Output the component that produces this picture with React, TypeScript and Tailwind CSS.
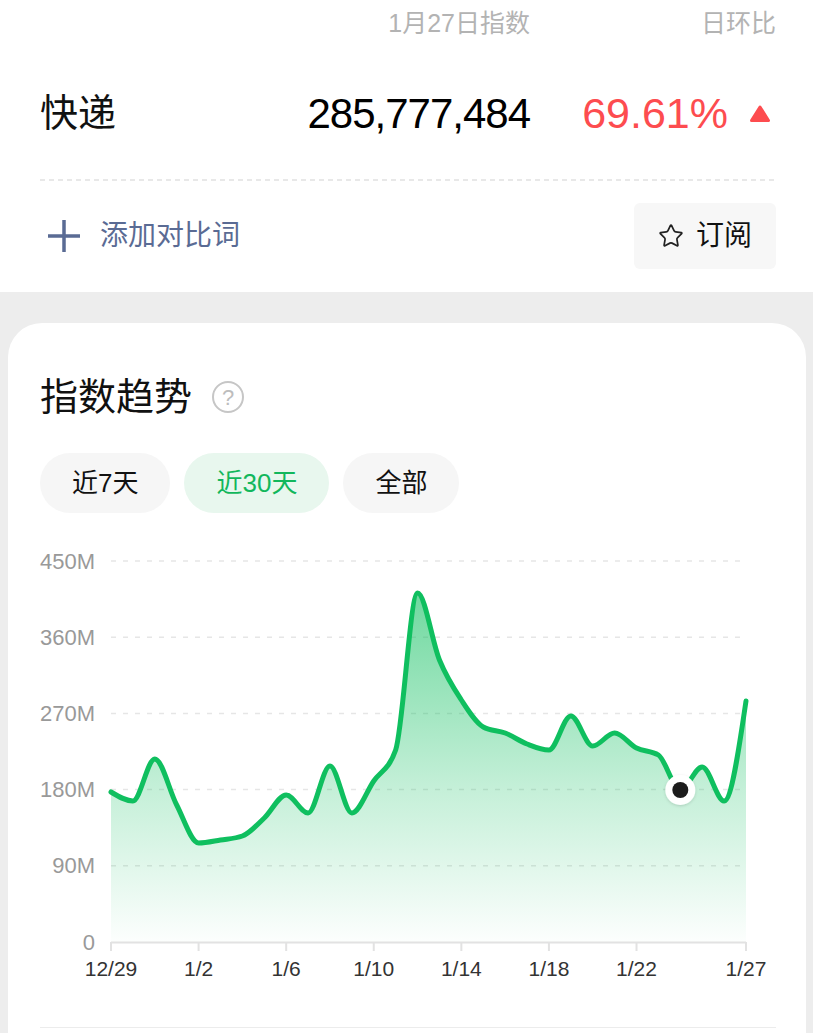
import { Star } from 'lucide-react'

const values = [
  792, 801, 759, 805, 843, 840, 836, 818, 795, 813, 766, 813, 781, 750, 593,
  660, 700, 727, 733, 744, 750, 716, 746, 733, 748, 755, 790, 767, 801, 701,
]

const X0 = 111
const X1 = 746
const Y0 = 942
const STEP = (X1 - X0) / 29

const gridValues = [450, 360, 270, 180, 90]
const xLabels = [
  { i: 0, t: '12/29' },
  { i: 4, t: '1/2' },
  { i: 8, t: '1/6' },
  { i: 12, t: '1/10' },
  { i: 16, t: '1/14' },
  { i: 20, t: '1/18' },
  { i: 24, t: '1/22' },
  { i: 29, t: '1/27' },
]

const valueToY = (v: number) => Y0 - (v / 450) * 381

// monotone cubic through the points, same idea as d3's curveMonotoneX
function buildPath(ys: number[]) {
  const h = STEP
  const n = ys.length
  const s: number[] = []
  for (let i = 0; i < n - 1; i++) s.push((ys[i + 1] - ys[i]) / h)
  const m: number[] = new Array(n).fill(0)
  for (let i = 1; i < n - 1; i++) {
    const a = s[i - 1]
    const b = s[i]
    if (a * b <= 0) {
      m[i] = 0
    } else {
      const p = (a + b) / 2
      m[i] = (Math.sign(a) + Math.sign(b)) * Math.min(Math.abs(a), Math.abs(b), 0.5 * Math.abs(p))
    }
  }
  m[0] = (3 * s[0] - m[1]) / 2
  m[n - 1] = (3 * s[n - 2] - m[n - 2]) / 2

  let d = `M${X0},${ys[0]}`
  for (let i = 0; i < n - 1; i++) {
    const xa = X0 + i * h
    const xb = xa + h
    d += ` C${xa + h / 3},${ys[i] + (m[i] * h) / 3} ${xb - h / 3},${ys[i + 1] - (m[i + 1] * h) / 3} ${xb},${ys[i + 1]}`
  }
  return d
}

function TrendChart() {
  const line = buildPath(values)
  const area = `${line} L${X1},${Y0} L${X0},${Y0} Z`
  const dotX = X0 + 26 * STEP
  const dotY = values[26]

  return (
    <svg width={798} height={470} viewBox="8 530 798 470" className="block">
      <defs>
        <linearGradient id="areaFill" x1="0" y1="0" x2="0" y2="1">
          <stop offset="0%" stopColor="#0fbf5f" stopOpacity={0.6} />
          <stop offset="55%" stopColor="#0fbf5f" stopOpacity={0.25} />
          <stop offset="100%" stopColor="#0fbf5f" stopOpacity={0.01} />
        </linearGradient>
        <filter id="dotShadow" x="-50%" y="-50%" width="200%" height="200%">
          <feDropShadow dx="0" dy="1" stdDeviation="1.5" floodColor="#000" floodOpacity="0.15" />
        </filter>
      </defs>

      {gridValues.map((v) => (
        <g key={v}>
          <line
            x1={X0}
            x2={740}
            y1={valueToY(v)}
            y2={valueToY(v)}
            stroke="#e6e6e6"
            strokeWidth={1.5}
            strokeDasharray="5 7"
          />
          <text x={95} y={valueToY(v)} textAnchor="end" dominantBaseline="central" fontSize={22} fill="#999">
            {v}M
          </text>
        </g>
      ))}
      <text x={95} y={Y0} textAnchor="end" dominantBaseline="central" fontSize={22} fill="#999">
        0
      </text>

      <path d={area} fill="url(#areaFill)" />
      <path d={line} fill="none" stroke="#0fbf5f" strokeWidth={5} strokeLinejoin="round" strokeLinecap="round" />

      <line x1={X0} x2={X1} y1={Y0 + 0.5} y2={Y0 + 0.5} stroke="#e2e2e2" strokeWidth={2} />
      {xLabels.map((l) => {
        const x = X0 + l.i * STEP
        return (
          <g key={l.t}>
            <line x1={x} x2={x} y1={Y0} y2={Y0 + 9} stroke="#e2e2e2" strokeWidth={2} />
            <text x={x} y={968} textAnchor="middle" dominantBaseline="central" fontSize={21} fill="#333">
              {l.t}
            </text>
          </g>
        )
      })}

      <circle cx={dotX} cy={dotY} r={15} fill="#fff" filter="url(#dotShadow)" />
      <circle cx={dotX} cy={dotY} r={8} fill="#1c1c1c" />
    </svg>
  )
}

export default function App() {
  return (
    <div className="w-[813px] min-h-[1033px] bg-[#ededed] font-['Liberation_Sans','Noto_Sans_CJK_SC',sans-serif] overflow-hidden">
      <div className="bg-white pl-[40px] pr-[37px]">
        <div className="flex h-[48px] items-center text-[25px] text-[#b3b3b3]">
          <div className="flex-1" />
          <div className="mr-[2px]">1月27日指数</div>
          <div className="w-[244px] text-right">日环比</div>
        </div>

        <div className="flex h-[131px] items-center">
          <div className="flex-1 text-[38px] text-[#111]">快递</div>
          <div className="text-[42px] tracking-[-1px] text-black">285,777,484</div>
          <div className="flex w-[246px] items-center justify-end">
            <span className="text-[43px] text-[#fd4c4f]">69.61%</span>
            <svg width="20" height="17" viewBox="0 0 20 17" className="ml-[22px] mr-[6px]">
              <polygon
                points="10,2 18.5,15.5 1.5,15.5"
                fill="#fd4c4f"
                stroke="#fd4c4f"
                strokeWidth={3}
                strokeLinejoin="round"
              />
            </svg>
          </div>
        </div>

        <div className="h-[2px] bg-[linear-gradient(to_right,#e8e8e8_55%,transparent_0)] bg-[length:9px_2px]" />

        <div className="flex items-center justify-between pt-[22px] pb-[23px]">
          <div className="flex items-center gap-[20px] pl-[8px] text-[28px] text-[#5a6b94]">
            <svg width="32" height="32" viewBox="0 0 32 32">
              <path d="M0 16H32M16 0V32" stroke="#5a6b94" strokeWidth={3.5} />
            </svg>
            <span>添加对比词</span>
          </div>
          <button className="flex h-[66px] w-[142px] items-center justify-center gap-[12px] rounded-[6px] bg-[#f7f7f7] text-[28px] text-[#111]">
            <Star size={26} strokeWidth={1.6} className="text-[#222]" />
            <span>订阅</span>
          </button>
        </div>
      </div>

      <div className="mt-[31px] ml-[8px] mr-[7px] rounded-t-[34px] bg-white pt-[50px] pb-[40px]">
        <div className="flex h-[48px] items-center gap-[20px] px-[32px]">
          <span className="text-[38px] text-[#111]">指数趋势</span>
          <div className="flex h-[32px] w-[32px] items-center justify-center rounded-full border-2 border-[#c6c6c6] text-[22px] text-[#bdbdbd]">
            ?
          </div>
        </div>

        <div className="mt-[32px] flex gap-[14px] px-[32px]">
          <button className="h-[60px] rounded-full bg-[#f6f6f6] px-[32px] text-[26px] text-[#111]">近7天</button>
          <button className="h-[60px] rounded-full bg-[#e8f7ee] px-[32px] text-[26px] text-[#12b75c]">近30天</button>
          <button className="h-[60px] rounded-full bg-[#f6f6f6] px-[32px] text-[26px] text-[#111]">全部</button>
        </div>

        <div className="mt-[17px]">
          <TrendChart />
        </div>

        <div className="mt-[27px] ml-[32px] mr-[30px] h-[1px] bg-[#ececec]" />
      </div>
    </div>
  )
}
